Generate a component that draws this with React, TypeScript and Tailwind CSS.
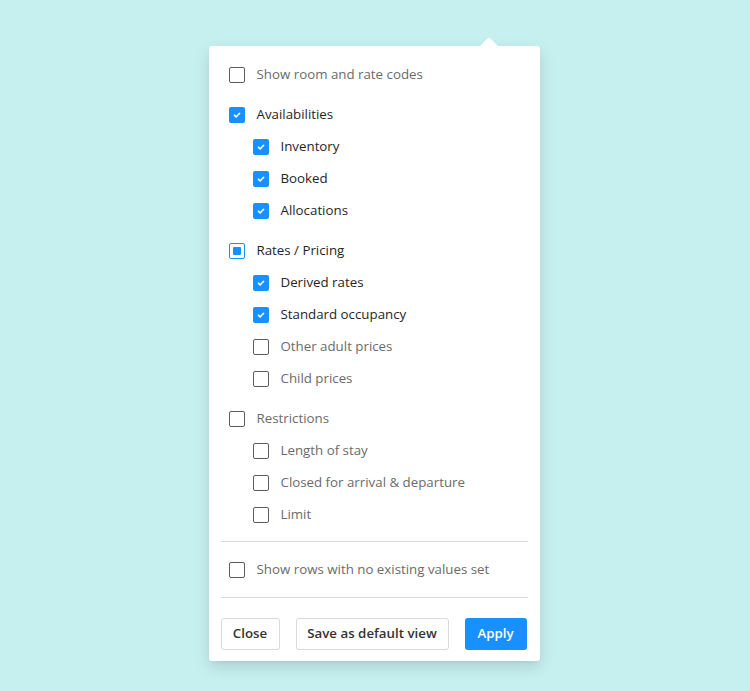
import React from "react";

type State = "on" | "off" | "mixed";

function Box({ s }: { s: State }) {
  if (s === "on")
    return (
      <span className="flex h-4 w-4 shrink-0 items-center justify-center rounded-[2px] bg-[#1890ff]">
        <svg width="10" height="10" viewBox="0 0 10 10" fill="none">
          <path d="M2.4 5.2 L4.2 6.9 L7.6 3.3" stroke="white" strokeWidth="1.6" strokeLinecap="round" strokeLinejoin="round" />
        </svg>
      </span>
    );
  if (s === "mixed")
    return (
      <span className="flex h-4 w-4 shrink-0 items-center justify-center rounded-[2px] border border-[#1890ff] bg-white">
        <span className="h-2 w-2 rounded-[1px] bg-[#1890ff]" />
      </span>
    );
  return <span className="h-4 w-4 shrink-0 rounded-[2px] border border-[#5c5c5c] bg-white" />;
}

function Row({ label, s, child }: { label: string; s: State; child?: boolean }) {
  return (
    <div className={`flex h-8 items-center gap-3 ${child ? "pl-6" : ""}`}>
      <Box s={s} />
      <span className={`text-[13.3px] ${s === "off" ? "text-[#6b6b6b]" : "text-[#262626]"}`}>{label}</span>
    </div>
  );
}

export default function App() {
  return (
    <div
      className="flex min-h-[691px] w-full justify-center bg-[#c6eff0] pt-[46px]"
      style={{ fontFamily: '"Open Sans", "Noto Sans", sans-serif' }}
    >
      <div className="relative h-[615px] w-[331px] translate-x-[-1px] rounded-[3px] bg-white px-3 pt-[13px] shadow-[0_6px_16px_rgba(0,0,0,0.12),0_3px_6px_-4px_rgba(0,0,0,0.12)]">
        <div className="absolute left-[273px] top-[-6px] h-[14px] w-[14px] rotate-45 rounded-[2px] bg-white" />
        <div className="relative flex flex-col gap-2 px-2">
          <div>
            <Row label="Show room and rate codes" s="off" />
          </div>
          <div>
            <Row label="Availabilities" s="on" />
            <Row label="Inventory" s="on" child />
            <Row label="Booked" s="on" child />
            <Row label="Allocations" s="on" child />
          </div>
          <div>
            <Row label="Rates / Pricing" s="mixed" />
            <Row label="Derived rates" s="on" child />
            <Row label="Standard occupancy" s="on" child />
            <Row label="Other adult prices" s="off" child />
            <Row label="Child prices" s="off" child />
          </div>
          <div>
            <Row label="Restrictions" s="off" />
            <Row label="Length of stay" s="off" child />
            <Row label="Closed for arrival & departure" s="off" child />
            <Row label="Limit" s="off" child />
          </div>
        </div>
        <div className="mt-[10px] h-px bg-[#d9d9d9]" />
        <div className="px-2 pt-3 pb-[11px]">
          <Row label="Show rows with no existing values set" s="off" />
        </div>
        <div className="h-px bg-[#d9d9d9]" />
        <div className="mt-5 flex items-center justify-between pr-px">
          <div className="flex gap-4">
            <button className="h-8 w-[59px] rounded-[3px] border border-[#d9d9d9] bg-white text-[13.3px] font-semibold text-[#333]">Close</button>
            <button className="h-8 w-[153px] rounded-[3px] border border-[#d9d9d9] bg-white text-[13.3px] font-semibold text-[#333]">Save as default view</button>
          </div>
          <button className="h-8 w-[62px] rounded-[3px] bg-[#1890ff] text-[13.3px] font-semibold text-white">Apply</button>
        </div>
      </div>
    </div>
  );
}
